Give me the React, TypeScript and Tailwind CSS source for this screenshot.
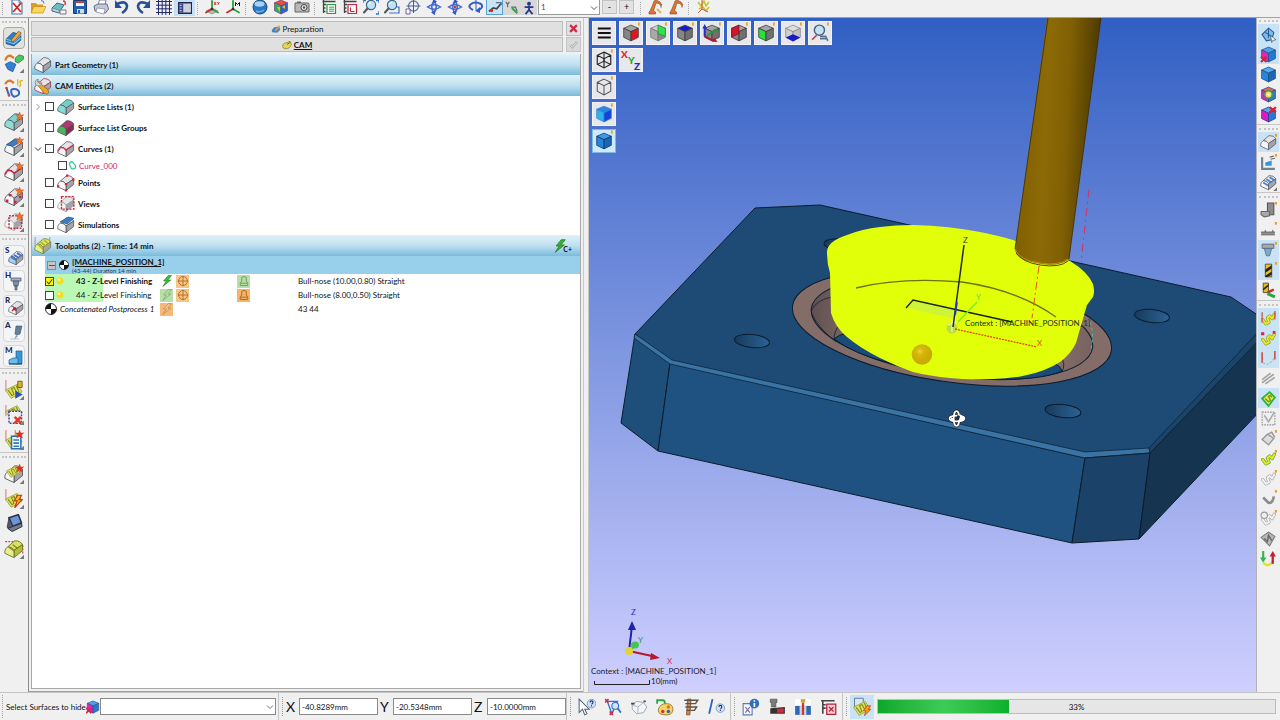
import { useState, type ReactNode } from 'react'

type P = { className?: string; children?: ReactNode }

const Ic = ({ className = 'size-4', children }: P) => (
  <svg viewBox="0 0 16 16" className={`shrink-0 ${className}`} fill="none" aria-hidden="true">
    {children}
  </svg>
)

/* ---------- shared drawing parts ---------- */

const Star = ({ x = 12.5, y = 3.5, c = '#f07a1c' }: { x?: number; y?: number; c?: string }) => (
  <path
    transform={`translate(${x} ${y})`}
    d="M0-3.4.8-1.1 3.2-1.2 1.4.4 2.3 2.9 0 1.5-2.3 2.9-1.4.4-3.2-1.2-.8-1.1Z"
    fill={c}
    stroke="#d9431c"
    strokeWidth=".4"
  />
)

const Corner = () => <path d="M16 12.5V16h-3.5Z" fill="#777" />

const BlockShape = ({ top = '#e4e4e8', side = '#a3a3aa', front = '#f6f6f8', line = '#55555c' }) => (
  <g stroke={line} strokeWidth=".7" strokeLinejoin="round">
    <path d="M3 6.200 8.500 1.500Q13 1.200 14.800 4.500L8 9Q6.500 6.500 3 6.200Z" fill={top} />
    <path d="M8 9 14.800 4.500V9.300L8 14.800Z" fill={side} />
    <path d="M.7 9.500Q.8 8 3 6.200 6.500 6.500 8 9V14.800L.7 11.500Z" fill={front} />
  </g>
)

const PathShape = () => (
  <g strokeLinecap="round" strokeLinejoin="round">
    <path d="M1.500 8 10.500 3.500 14.500 9.500 6 14.500Z" fill="#dfe35c" stroke="#9aa336" strokeWidth=".7" />
    <path d="M3.500 8.500 6.500 12.500 8 11.500 6 7 8 6 10.500 10.500 12 9.500 10 5" stroke="#7f8a26" strokeWidth=".9" />
  </g>
)

const CubeShape = ({ l = '#868686', r = '#707070', t = '#a5a5a5', line = '#3b3b3b' }) => (
  <g stroke={line} strokeWidth=".7" strokeLinejoin="round">
    <path d="M8 1 14.500 3.800 8 6.800 1.500 3.800Z" fill={t} />
    <path d="M1.500 3.800 8 6.800V15L1.500 11.800Z" fill={l} />
    <path d="M14.500 3.800 8 6.800V15l6.500-3.200Z" fill={r} />
  </g>
)

const Bolt = ({ c = '#35b52e', line = '#1d6d19' }) => (
  <path d="M9.500.8 3.500 8h3.600L2.500 15.200 13 6.800H9l5-6Z" fill={c} stroke={line} strokeWidth=".8" />
)

const Axes = ({ blue = '#2530b8' }) => (
  <g strokeWidth="1.800" strokeLinecap="round">
    <path d="M8 10V2" stroke={blue} />
    <path d="m8 10 6 3.500" stroke="#27a538" />
    <path d="m8 10-6 3.500" stroke="#c52a2a" />
    <circle cx="8" cy="10" r="1.300" fill="#333" />
  </g>
)

const Lens = () => (
  <g>
    <path d="m4.500 9.500-3.500 4" stroke="#555" strokeWidth="2" strokeLinecap="round" />
    <circle cx="8" cy="6" r="4.600" fill="#bfe2f7" stroke="#40688c" strokeWidth="1.200" />
    <path d="M5.500 5.500Q6 3.500 8 3.200" stroke="#fff" />
  </g>
)

const Robot = () => (
  <g>
    <path d="M2 15v-2l1-1 3-7 1-3 2-1 4 2 2 3-1.500.5-1.500-2-3-.5-2.500 8 2 1v2Z" fill="#dd7434" stroke="#8d4417" strokeWidth=".6" />
    <path d="M14 6.500v2" stroke="#555" />
  </g>
)

/* ---------- top toolbar ---------- */

const fileIcons: [string, ReactNode][] = [
  ['New', <Ic><path d="M3 1h7l3 3v11H3Z" fill="#fff" stroke="#5878a8" strokeWidth="1.200" /><path d="M10 1v3h3" fill="#cbd9ee" stroke="#5878a8" /><path d="m4 4 8 9M12 4l-8 9" stroke="#d02020" strokeWidth="1.800" /></Ic>],
  ['Open', <Ic><path d="M1 14V4h5l1 1.500h6V14Z" fill="#d99b20" /><path d="m1 14 3-6.500h12L13 14Z" fill="#fcd65a" stroke="#b98514" strokeWidth=".6" /><path d="M11 1.500q3 0 3 3" stroke="#4678b8" /></Ic>],
  ['Import', <Ic><path d="m1 9 5-5 7 2-4 6Z" fill="#66c0bb" stroke="#44688b" /><path d="M1 9v3l7 2 1-2" fill="#c2cede" stroke="#44688b" /><path d="M9 11h6v4H9Z" fill="#f6f6f6" stroke="#777" /><path d="M12 2q3 0 2 4" stroke="#d03844" strokeWidth="1.500" /></Ic>],
  ['Save', <Ic><path d="M1.500 1.500h13v13h-13Z" fill="#235fad" stroke="#173e77" /><path d="M4 2h8v5H4Z" fill="#fff" /><path d="M4 2h8v2H4Z" fill="#dc3838" /><path d="M5 10h7v4.500H5Z" fill="#cfdcec" /><path d="M6 11h2v3H6Z" fill="#235fad" /></Ic>],
  ['Print', <Ic><path d="m5 6 1.500-5H13l-1 5" fill="#fff" stroke="#7c84a2" /><path d="m1 7 4-2h9l1.500 5-3 4L2 12Z" fill="#c4c9d9" stroke="#656d8c" /><path d="m4 9 8 1-1 5-8-2Z" fill="#fff" stroke="#7c84a2" strokeWidth=".7" /></Ic>],
  ['Undo', <Ic><path d="M3 5q9-4 10 2 0 4-5 7" stroke="#274f96" strokeWidth="2.600" /><path d="M1 1v8h7Z" fill="#274f96" /></Ic>],
  ['Redo', <Ic><path d="M13 5Q4 1 3 7q0 4 5 7" stroke="#274f96" strokeWidth="2.600" /><path d="M15 1v8H8Z" fill="#274f96" /></Ic>],
  ['Grid', <Ic><path d="M2.500 0v16M6.200 0v16M9.800 0v16M13.500 0v16M0 2.500h16M0 6.200h16M0 9.800h16M0 13.500h16" stroke="#23296a" /></Ic>],
]
const axisIcons: [string, ReactNode][] = [
  ['XY plane', <Ic><path d="m8 9 6 3-6 3-6-3Z" fill="#b9b9b9" stroke="#777" strokeWidth=".6" /><Axes blue="#28a038" /><path d="m10 3 2 3m0-3-2 3m3.300-3 1 1.500m1-1.500-1.500 3" stroke="#c92828" strokeWidth=".9" /></Ic>],
  ['Machine axes', <Ic><Axes blue="#28a038" /><path d="M10.500 7V3.500l2 2 2-2V7" stroke="#111" /></Ic>],
]
const viewIcons: [string, ReactNode][] = [
  ['Render', <Ic><circle cx="8" cy="8" r="7" fill="#2b78c2" stroke="#174a82" /><ellipse cx="7.500" cy="5" rx="5" ry="2.800" fill="#a4d4f4" /><path d="M4 12q4 2 8-1" stroke="#66b8ee" strokeWidth="1.500" /></Ic>],
  ['Colours', <Ic><CubeShape l="#24b35d" r="#2864d8" t="#ee4f2e" line="#7a3c88" /><path d="m4 8 3 5V8Zm5 0 3 2v-4Z" fill="#ecbd26" /></Ic>],
  ['Camera', <Ic><path d="M1 4h13q1 0 1 1v8H1Z" fill="#b8b8b4" stroke="#666" /><circle cx="10" cy="8.500" r="3" fill="#eee" stroke="#444" /><path d="M3 2.500h4V4H3Z" fill="#666" /><circle cx="10" cy="8.500" r="1.300" fill="#555" /></Ic>],
]
const Sheet = ({ c, wide }: { c: string; wide?: boolean }) => <Ic><path d="M1.500 2.500h13M2.500 1v13M2 5.500h3M2 9h2.500M2 12.500h2.500" stroke="#444" strokeWidth="1.300" /><path d="M6 5.500h8.500v9H6Z" fill="#f7f7f7" stroke={c} strokeWidth="1.200" />{wide ? <path d="M8 8.200h5M8 10.200h5M8 12.200h5" stroke={c} strokeWidth=".9" /> : <path d="M8.500 8.500v4h4" stroke={c} />}</Ic>
const Orbit = ({ children }: P) => <Ic><path d="M1.500 8Q8 3.500 14.500 8 8 12.500 1.500 8Z" stroke="#4668d0" strokeWidth="1.500" /><path d="M8 1.500Q3.500 8 8 14.500 12.500 8 8 1.500Z" stroke="#4668d0" strokeWidth="1.500" /><path d="M7 0v5l4-2.500ZM9 16v-5l-4 2.500Z" fill="#3159c8" />{children}</Ic>
const zoomIcons: [string, ReactNode][] = [
  ['Tree list', <Sheet c="#2a9b48" wide />],
  ['Hide list', <Sheet c="#bd2a43" />],
  ['Zoom all', <Ic><Lens /><path d="M0 4V1.500h3M13 1.500h3V4M16 12v3h-3" stroke="#3472ce" strokeWidth="1.300" /></Ic>],
  ['Zoom window', <Ic><path d="M7 8h8v6H5" stroke="#3472ce" strokeWidth="1.200" /><Lens /></Ic>],
  ['Centre', <Ic><circle cx="8.500" cy="7" r="5" stroke="#6681ad" strokeWidth="1.300" /><path d="M8.500 0v14M1.500 7h14" stroke="#44608e" /><path d="M1 10h4v5H1Z" fill="#fff" stroke="#7c5ca8" /></Ic>],
  ['Rotate', <Orbit />],
  ['Rotate point', <Orbit><circle cx="8" cy="8" r="1.300" fill="#d83a2a" /></Orbit>],
  ['Spin', <Ic><path d="M5 11Q-1 8 3 5t10 0q3 3-2 6" stroke="#3159c8" strokeWidth="2" /><path d="M12 8v6l-5-2Z" fill="#3159c8" /><path d="M8 0v11" stroke="#3159c8" /></Ic>],
]

const Sep = () => <span className="h-full w-1.5 shrink-0 py-0.5 pl-0.5"><span className="block h-full border-l border-dotted border-[#a5a5a5]" /></span>

const Tools = ({ items, cell }: { items: [string, ReactNode][]; cell: string }) => (
  <>
    {items.map(([name, icon]) => (
      <button key={name} type="button" aria-label={name} className={`flex shrink-0 items-center justify-center ${cell}`}>
        {icon}
      </button>
    ))}
  </>
)

function TopBar() {
  const cell = 'w-[21px] h-[13px]'
  return (
    <header className="flex h-[18px] shrink-0 items-start overflow-hidden border-b border-[#a0a0a0] bg-[#f0f0f0]">
      <Sep />
      <Tools cell={cell} items={fileIcons} />
      <button type="button" aria-label="Side panel" className="flex h-4 w-[21px] shrink-0 items-center justify-center bg-[#c5dff3]">
        <Ic className="size-3.5"><path d="M.5 2h15v12H.500Z" fill="#d0cfdc" stroke="#252750" strokeWidth="1.500" /><path d="M1 3h5v10H1Z" fill="#354c91" /><path d="M2 5h2M2 8h2M2 11h2" stroke="#fff" /></Ic>
      </button>
      <Sep />
      <Tools cell={cell} items={axisIcons} />
      <Sep />
      <Tools cell={cell} items={viewIcons} />
      <Sep />
      <Tools cell={cell} items={zoomIcons} />
      <button type="button" aria-label="Dynamic view" className="flex h-[15px] w-[17px] shrink-0 items-center justify-center border border-[#57a1d9] border-t-0 bg-[#c8e4f6]">
        <Ic className="size-3.5"><path d="m1 13 5-4 4 1 5-6" stroke="#444" strokeWidth="2" /><circle cx="4" cy="12" r="2" fill="#c92e2e" /><path d="M9 3h6v3" stroke="#607080" strokeWidth="1.500" /></Ic>
      </button>
      <button type="button" aria-label="Axis view" className="flex h-[15px] w-[17px] shrink-0 items-center justify-center bg-[#d8d8d8]">
        <Ic className="size-3.5"><path d="m1 1 2 3 2-3M3 4v3M7 7h5l2 5" stroke="#666" strokeWidth="1.300" /><path d="m8 8 6 6" stroke="#2aac3e" strokeWidth="2.500" /></Ic>
      </button>
      <button type="button" aria-label="Walk" className="mr-px flex h-[15px] w-[17px] shrink-0 items-center justify-center bg-[#d8d8d8]">
        <Ic className="size-3.5"><circle cx="8" cy="3" r="2.200" fill="#27338e" /><path d="M3 7h10M8 5v5l-4 5m4-5 4 5" stroke="#27338e" strokeWidth="2" /></Ic>
      </button>
      <div className="relative flex shrink-0">
        <select aria-label="Level" className="h-[15px] w-[62px] appearance-none border border-t-0 border-[#999] bg-white pl-0.5 text-[8px] leading-[13px] text-[#7a2590]">
          <option>1</option>
        </select>
        <Ic className="pointer-events-none absolute top-1 right-0.5 size-2"><path d="m2 5 6 6 6-6" stroke="#444" strokeWidth="1.800" /></Ic>
      </div>
      <button type="button" className="ml-0.5 h-3.5 w-[15px] border border-[#c2c2c2] bg-[#e2e2e2] text-[9px] leading-3">-</button>
      <button type="button" className="ml-0.5 mr-1 h-3.5 w-[15px] border border-[#c2c2c2] bg-[#e2e2e2] text-[9px] leading-3">+</button>
      <Sep />
      <Tools cell={cell} items={[
        ['Robot', <Ic><Robot /><path d="m10 10 4 4" stroke="#e8b348" strokeWidth="2" /></Ic>],
        ['Robot arm', <Ic><Robot /></Ic>],
      ]} />
      <Sep />
      <Tools cell={cell} items={[
        ['Toolpath axes', <Ic><path d="m3 3 3 4 3-5 2 5 3-4M4 10l4-2 3 4 3-4" stroke="#c9c130" strokeWidth="1.500" /><path d="M7 0v10l-4 4m4-4 6 3" stroke="#c65a32" /></Ic>],
      ]} />
    </header>
  )
}

/* ---------- left toolbar ---------- */

const Letter = ({ ch, children }: { ch: string; children: ReactNode }) => (
  <span className="relative flex size-[22px] items-center justify-center rounded-[4px] border border-[#d4d6da] bg-[#f4f5f6] pt-1 pl-1">
    <span className="absolute top-0 left-px text-[8px] leading-[8px] font-black text-[#23285f]">{ch}</span>
    {children}
  </span>
)

const L = 'size-5'
const leftGroups: [string, ReactNode][][] = [
  [
    ['Preparation', <span className="flex size-[22px] items-center justify-center rounded-[4px] border border-[#a9a9a4] bg-[#e2e2dd]"><Ic className="size-[18px]"><path d="m1 9 6-6 7 2v5l-6 5-7-2Z" fill="#2b7ec7" stroke="#194e84" strokeWidth=".7" /><path d="m1 9 7 2 6-6M1 11l7 2 6-5" stroke="#8cc6ee" strokeWidth=".9" /><path d="m6 9 6-7 2.500 1.500-6 7-3 1Z" fill="#f0a83c" stroke="#814e16" strokeWidth=".6" /></Ic></span>],
    ['Transform solid', <Ic className={L}><path d="M1 6q1-4 4-4l3 2" stroke="#e07a28" strokeWidth="1.800" /><path d="m9 4 3-2.500 3.500 1V5l-4 3L9 7Z" fill="#4cc760" stroke="#3d6645" strokeWidth=".6" /><path d="m1 9 4-2 4.500 2L7 15l-4-2Z" fill="#3380d5" stroke="#1c4e91" strokeWidth=".6" /><Corner /></Ic>],
    ['Transform curve', <Ic className={L}><path d="M1 5q1-3 4-3l3 2" stroke="#e07a28" strokeWidth="1.800" /><path d="M11 1v5M15 2q-3 0-2 2t-1 3" stroke="#d9c02a" strokeWidth="1.200" /><path d="m2 8 2 6M6 9q5-1 6 2t-4 4q-3-2-2-6" stroke="#2f67c5" strokeWidth="1.600" /><circle cx="2" cy="8" r="1" fill="#c8443b" /><circle cx="4" cy="14" r="1" fill="#c8443b" /></Ic>],
  ],
  [
    ['Surface list', <Ic className={L}><BlockShape top="#7fd3cd" front="#92dcd6" /><Star /><Corner /></Ic>],
    ['Simulation', <Ic className={L}><BlockShape /><path d="m2 6 7-4 5 1-7 4.500Z" fill="#3b80c6" stroke="#1f4d85" strokeWidth=".6" /><Star y={3} /><Corner /></Ic>],
    ['Curve', <Ic className={L}><BlockShape /><path d="M1 10 3 6.500Q6.500 6.500 8 9l6.500-4.500" stroke="#c8243e" strokeWidth="1.200" /><Star /><Corner /></Ic>],
    ['Points', <Ic className={L}><BlockShape /><path d="M1.500 11h2M4 6.500h2M8 12h2M12 8h2" stroke="#d3203a" strokeWidth="2" /><Star /><Corner /></Ic>],
    ['View', <Ic className={L}><BlockShape line="#aaa" /><path d="M4 3h10v10H4Z" stroke="#bb3344" strokeDasharray="1.500 1" strokeWidth="1.200" /><Star /><Corner /></Ic>],
  ],
  [
    ['Surface', <Letter ch="S"><Ic><BlockShape front="#aecdf5" /><path d="m3 7 5 3M6 5l5 3M9 3l5 3" stroke="#3475d8" strokeWidth="2" /></Ic></Letter>],
    ['Holder', <Letter ch="H"><Ic><path d="M3 3h10v3H3Z" fill="#a8b2bd" stroke="#53606d" strokeWidth=".8" /><path d="M5 6h6l-1 5H6ZM7 11h2v4H7Z" fill="#7890a4" stroke="#44576a" strokeWidth=".7" /></Ic></Letter>],
    ['Region', <Letter ch="R"><Ic><BlockShape /><path d="m4 11 3-3m-2 0h2.500V11" stroke="#d0202e" strokeWidth="1.500" /></Ic></Letter>],
    ['Attach', <Letter ch="A"><Ic><path d="M8 1h6l-2 8-3 1-2-1Z" fill="#657f9c" stroke="#3d536c" strokeWidth=".6" /><path d="m8 10-2 5 4-4" fill="#8fa2b4" /><path d="M2 14h9" stroke="#bdc7d0" /></Ic></Letter>],
    ['Machine', <Letter ch="M"><Ic><path d="M8 1h6v13H8Z" fill="#3798d8" stroke="#1d5d92" strokeWidth=".7" /><path d="m1 10 4-2h5v6H1Z" fill="#69bdea" stroke="#1d5d92" strokeWidth=".7" /><path d="M1 14h13" stroke="#345" /></Ic></Letter>],
  ],
  [
    ['Run toolpath', <Ic className={L}><path d="M1.500 0v9" stroke="#e88" /><PathShape /><path d="M11 1h3.500v5H11Z" fill="#dfb028" stroke="#554312" strokeWidth=".6" /><path d="m9 8.500 6 3-6 3.500Z" fill="#2351ba" /><Corner /></Ic>],
    ['Delete toolpath', <Ic className={L}><path d="M1.500 0v9" stroke="#e88" /><g transform="translate(0 -3)"><PathShape /></g><path d="M4 5h10v9.500H4Z" fill="#f0f0f0" stroke="#3345c0" strokeWidth="1.200" strokeDasharray="1.500 1" /><path d="m8.500 9.500 5 5m0-5-5 5" stroke="#e13a25" strokeWidth="2" /><Corner /></Ic>],
    ['Toolpath list', <Ic className={L}><path d="M1.500 0v9M9 0v4" stroke="#e88" /><PathShape /><path d="M6 5h7.500v10H6Z" fill="#f1f8fd" stroke="#2d6db1" strokeWidth="1.200" /><path d="M7.500 8h4.500M7.500 10.500h4.500M7.500 13h4.500" stroke="#3376bb" strokeWidth="1.300" /><Star c="#e22" /><Corner /></Ic>],
  ],
  [
    ['New stock', <Ic className={L}><BlockShape /><g transform="translate(1 -1) scale(.8)"><PathShape /></g><Star c="#e22" /><Corner /></Ic>],
    ['Compute', <Ic className={L}><path d="M1.500 0v9" stroke="#e88" /><PathShape /><path d="m11 5-3 4.500h2.500L8.500 15l6-6.500H12L14 5Z" fill="#f3c020" stroke="#c83418" strokeWidth=".9" /><Corner /></Ic>],
    ['Workstation', <Ic className={L}><path d="m4 3 7.500-2.500L14 7l-7 3Z" fill="#6d92dc" stroke="#2a2f3c" strokeWidth="1.200" /><path d="m4 3-1.500 7.500 2 2L7 10Z" fill="#555a66" stroke="#2a2f3c" strokeWidth=".6" /><path d="m3 11.500 4-1.500 7-2.500.500 2.500L6.500 14Z" fill="#777c88" stroke="#2a2f3c" strokeWidth=".8" /></Ic>],
    ['Stock', <Ic className={L}><path d="M1 2h10l4 3v7" stroke="#d04040" strokeDasharray="1.500 1" /><BlockShape top="#dbe35e" front="#e9ee8c" side="#b4bd3c" line="#68702c" /><path d="m4 6.500 4 3M7 4.500l4 3" stroke="#7e8b28" /><Corner /></Ic>],
  ],
]

const DotsRow = ({ first, className }: { first?: boolean; className: string }) => (
  <span className={`flex shrink-0 items-center px-0.5 ${className} ${first ? '' : 'border-t border-[#c6c6c6]'}`}>
    <span className="block w-full border-t-2 border-dotted border-[#c4c4c4]" />
  </span>
)

function LeftBar() {
  return (
    <nav aria-label="Preparation tools" className="w-[29px] shrink-0 overflow-hidden border-r border-[#8f8f8f] bg-[#f0f0f0]">
      {leftGroups.map((g, i) => (
        <div key={i} className="flex flex-col">
          <DotsRow first={i === 0} className={i === 0 ? 'h-[7px]' : 'h-[9px]'} />
          <Tools items={g} cell="h-[25px] w-7" />
        </div>
      ))}
    </nav>
  )
}

/* ---------- tree panel ---------- */

const Check = ({ label, checked = false, className = '' }: { label: string; checked?: boolean; className?: string }) => {
  const [on, setOn] = useState(checked)
  return (
    <label className={`relative flex size-[9px] shrink-0 ${className}`}>
      <input
        type="checkbox"
        aria-label={label}
        checked={on}
        onChange={() => setOn(!on)}
        className="size-[9px] appearance-none border border-[#444] bg-white checked:bg-[#fbf30c]"
      />
      {on && <Ic className="pointer-events-none absolute inset-0 size-[9px]"><path d="m3 8 4 4 6-8" stroke="#333" strokeWidth="1.800" /></Ic>}
    </label>
  )
}

const Bar = ({ icon, children, action }: { icon: ReactNode; children: ReactNode; action?: ReactNode }) => (
  <h2 className="flex h-[21px] items-center bg-linear-to-b from-[#e0f1fa] from-0% via-[#bfe0f0] via-50% to-[#79bbdb] to-100% pl-0.5 text-[8px] font-bold">
    <span className="flex w-[21px] shrink-0">{icon}</span>
    <span className="flex-1">{children}</span>
    {action}
  </h2>
)

const B = 'size-[18px]'
const Chevron = ({ open }: { open: boolean }) => (
  <Ic className="size-2"><path d={open ? 'm2 5 6 6 6-6' : 'm5 2 6 6-6 6'} stroke={open ? '#333' : '#999'} strokeWidth="2" /></Ic>
)

const Row = ({ name, icon, open }: { name: string; icon: ReactNode; open?: boolean }) => (
  <li className="flex h-[21px] items-center pl-0.5 text-[8px] font-bold">
    <span className="flex w-[11px]">
      {open !== undefined && <button type="button" aria-label={`Toggle ${name}`}><Chevron open={open} /></button>}
    </span>
    <Check label={name} />
    <span className="mr-[3px] ml-[3px] flex">{icon}</span>
    {name}
  </li>
)

const Wheel = ({ className }: P) => (
  <Ic className={className}><circle cx="8" cy="8" r="7.300" fill="#fff" stroke="#111" strokeWidth="1.200" /><path d="M8 8V.7A7.300 7.300 0 0 0 .7 8ZM8 8v7.300A7.300 7.300 0 0 0 15.300 8Z" fill="#111" /></Ic>
)

const Tile = ({ c, children }: { c: string; children: ReactNode }) => (
  <span className={`flex size-[13px] items-center justify-center ${c}`}>{children}</span>
)
const Target = () => <Ic className="size-3"><circle cx="8" cy="8" r="6" stroke="#b9702b" strokeWidth="1.300" /><path d="M8 1v14M1 8h14" stroke="#b9702b" strokeWidth="1.300" /></Ic>
const Stamp = ({ c }: { c: string }) => <Ic className="size-3"><path d="M5 3q3-2 6 0v5l2 3v3H3v-3l2-3ZM3 11h10" stroke={c} strokeWidth="1.300" /></Ic>

const PathRow = ({ n, bold, tool }: { n: number; bold?: boolean; tool: string }) => (
  <li className={`grid h-3.5 grid-cols-[58px_57px_16px_61px_61px_1fr] items-center text-[8px] ${bold ? '[&_b]:font-bold' : '[&_b]:font-normal'}`}>
    <span className="flex h-full items-center gap-0.5 bg-[#b9f9b5]">
      <Check label={`Toolpath ${n}`} checked={bold} />
      <Ic className="size-2"><circle cx="8" cy="8" r="7" fill="#f1df27" /><circle cx="6" cy="5.500" r="2.500" fill="#fff69c" /></Ic>
      <b className="ml-2.5 whitespace-nowrap">{n} - Z-Level Finishing</b>
    </span>
    <span />
    <Tile c={bold ? '' : 'bg-[#b7dfa7]'}><Ic className="size-3"><Bolt c={bold ? '#3cc233' : '#b7dfa7'} line={bold ? '#236e1e' : '#729a66'} /></Ic></Tile>
    <Tile c="bg-[#f7c787]"><Target /></Tile>
    <Tile c={bold ? 'bg-[#b7dfa7]' : 'bg-[#f7b467]'}><Stamp c={bold ? '#6ea15f' : '#a8682b'} /></Tile>
    <span className="whitespace-nowrap">{tool}</span>
  </li>
)

function TreePanel() {
  return (
    <section className="flex min-w-0 flex-[550] flex-col border-b border-[#a0a0a0] pt-[3px] pr-0.5 pb-0.5 pl-0.5">
      <div className="flex h-[15px] gap-[3px] text-[8px]">
        <button type="button" className="flex min-w-0 flex-1 items-center justify-center gap-0.5 border border-[#bcbcbc] bg-[#e0e0e0]">
          <Ic className="size-2.5"><path d="m1 10 4-5 8-1 2 5-5 5-8-1Z" fill="#3f86c7" /><path d="m6 10 7-8 2 1.500-7 8Z" fill="#e99a3c" /></Ic>
          Preparation
        </button>
        <button type="button" aria-label="Close" className="flex w-[15px] items-center justify-center border border-[#bcbcbc] bg-[#e0e0e0]">
          <Ic className="size-[9px]"><path d="m2 2 12 12M14 2 2 14" stroke="#cf2b45" strokeWidth="4" /></Ic>
        </button>
      </div>
      <div className="mt-px flex h-[15px] gap-[3px] text-[8px]">
        <button type="button" className="flex min-w-0 flex-1 items-center justify-center gap-0.5 border border-[#bcbcbc] bg-[#e0e0e0] font-bold">
          <Ic className="size-2.5"><path d="M1 10q0-5 7-6l5-2 2 5q-2 7-9 7-5 0-5-4Z" fill="#e5d650" stroke="#77702c" /><path d="m8 7 5-3" stroke="#555" strokeWidth="1.500" /></Ic>
          <span className="underline">CAM</span>
        </button>
        <button type="button" aria-label="Accept" className="flex w-[15px] items-center justify-center border border-[#c4c4c4] bg-[#d9d9d9]">
          <Ic className="size-[9px]"><path d="m2 9 4 4 8-10" stroke="#aaa" strokeWidth="4" /><path d="m2 9 4 4 8-10" stroke="#eee" strokeWidth="1.500" /></Ic>
        </button>
      </div>
      <div className="mt-0.5 min-h-0 flex-1 overflow-hidden border border-t-0 border-[#a8a8a8] bg-white">
        <Bar icon={<Ic className={B}><BlockShape /></Ic>}>Part Geometry (1)</Bar>
        <Bar icon={<Ic className={B}><BlockShape line="#b92b3c" /><path d="M2 4q3-1 4 2l6 5q2 3 0 4t-4-2L4 8Q1 7 2 4Z" fill="#e8a836" stroke="#99651a" strokeWidth=".7" /><path d="M1 5q0-3 3-3L3 4l2 2 2-1q0 3-3 3T1 5Z" fill="#d7d7db" stroke="#77777c" strokeWidth=".6" /></Ic>}>CAM Entities (2)</Bar>
        <ul>
          <Row name="Surface Lists (1)" open={false} icon={<Ic className={B}><BlockShape top="#6fd0c8" front="#86ddd4" /></Ic>} />
          <Row name="Surface List Groups" icon={<Ic className={B}><BlockShape top="#b0386c" front="#4bb55e" side="#8d2852" /></Ic>} />
          <Row name="Curves (1)" open icon={<Ic className={B}><BlockShape /><path d="M1 10 3 6.500Q6.500 6.500 8 9l6.500-4.500" stroke="#d2304a" strokeWidth="1.200" /></Ic>} />
          <li className="flex h-[13px] items-center pl-[26px] text-[8px] text-[#e0185e]">
            <Check label="Curve_000" />
            <Ic className="mr-0.5 ml-px size-[9px]"><path d="M4 2q4-2 6 2l3 4q2 5-3 6t-5-4Q1 7 4 2Z" stroke="#36c69c" strokeWidth="2.200" /></Ic>
            Curve_000
          </li>
          <Row name="Points" icon={<Ic className={B}><BlockShape /><path d="M0 11h2M8 1.500h2M7 9h2M13.500 5h2M7 14.500h2" stroke="#d3203a" strokeWidth="2" /></Ic>} />
          <Row name="Views" icon={<Ic className={B}><BlockShape line="#999" /><path d="M4 1.500h11v11H4Z" stroke="#cc2a3d" strokeDasharray="2 1" strokeWidth="1.200" /></Ic>} />
          <Row name="Simulations" icon={<Ic className={B}><BlockShape /><path d="m3 5 7-4 5 1-6 5Z" fill="#3b80c6" stroke="#1f4d85" strokeWidth=".6" /></Ic>} />
        </ul>
        <Bar
          icon={<Ic className={B}><path d="M1 0v8M14 0v5" stroke="#e08a8a" /><BlockShape top="#dbe35e" front="#e9ee8c" line="#77803c" /><path d="m3 6 5 5M6 4.500l5 4M9 3l4 3" stroke="#aeb52d" strokeWidth="1.300" /></Ic>}
          action={<button type="button" aria-label="Compute all" className="mr-2 flex items-end"><Ic className="size-3.5"><Bolt /></Ic><span className="-ml-1 text-[7px] leading-[7px]">C+</span></button>}
        >
          Toolpaths (2) - Time: 14 min
        </Bar>
        <ul className="pl-[13px]">
          <li className="flex h-[18px] items-center bg-[#98cfea]">
            <button type="button" aria-label="Collapse" className="ml-0.5 flex size-[9px] items-center justify-center border border-[#888] bg-[#c5c5c5]"><span className="block w-1.5 border-t border-[#555]" /></button>
            <Wheel className="mr-[3px] ml-[3px] size-2.5" />
            <div className="leading-none">
              <div className="text-[8px] leading-[10px] font-bold underline">[MACHINE_POSITION_1]</div>
              <div className="text-[6px] leading-[7px] text-[#223a55]">(43-44) Duration 14 min</div>
            </div>
          </li>
          <PathRow n={43} bold tool="Bull-nose (10.00,0.80) Straight" />
          <PathRow n={44} tool="Bull-nose (8.00,0.50) Straight" />
          <li className="grid h-3.5 grid-cols-[115px_138px_1fr] items-center text-[8px]">
            <span className="flex items-center gap-[3px] whitespace-nowrap italic"><Wheel className="size-3" />Concatenated Postprocess 1</span>
            <Tile c="bg-[#f7b97a]"><Ic className="size-3"><Bolt c="#f3c894" line="#b77634" /></Ic></Tile>
            <span>43 44</span>
          </li>
        </ul>
      </div>
    </section>
  )
}

/* ---------- 3D viewport ---------- */

function Scene() {
  return (
    <svg className="absolute inset-0 size-full" viewBox="589 18 667 674" preserveAspectRatio="xMidYMid slice" role="img" aria-label="3D part view">
      <defs>
        <linearGradient id="sky" x1="0" y1="0" x2="0" y2="1"><stop stopColor="#315fc3" /><stop offset="1" stopColor="#cfcfff" /></linearGradient>
        <linearGradient id="rod" x1="0" y1="0" x2="1" y2=".13"><stop stopColor="#7c5c00" /><stop offset=".4" stopColor="#8c6a06" /><stop offset=".65" stopColor="#806004" /><stop offset="1" stopColor="#4c3900" /></linearGradient>
        <radialGradient id="ball" cx=".4" cy=".35"><stop stopColor="#ead24a" /><stop offset=".35" stopColor="#d8b70a" /><stop offset="1" stopColor="#c9ab04" /></radialGradient>
        <linearGradient id="hole"><stop stopColor="#173b5c" /><stop offset="1" stopColor="#2c6294" /></linearGradient>
        <linearGradient id="wall"><stop stopColor="#5f504f" /><stop offset=".2" stopColor="#86706d" /><stop offset=".8" stopColor="#8d7672" /><stop offset="1" stopColor="#77625f" /></linearGradient>
      </defs>
      <rect x="-1000" y="18" width="4000" height="674" fill="url(#sky)" />
      <g stroke="#0b1c2c" strokeWidth="1" strokeLinejoin="round">
        <path d="M755 208 820 205 1231 297 1262 318V334L1150 450 1085 454 668 361 635 334Z" fill="#1d4b75" />
        <path d="M635 334 670 363 658 451 621 423Z" fill="#1e4e7a" />
        <path d="M670 363 1085 458 1072 543 658 451Z" fill="#1f5281" />
        <path d="M635 334 672 360 1085 452 1149 448 1150 453 1085 458 670 364 634 338Z" fill="#3a74a5" strokeWidth=".7" />
        <path d="M1085 458 1150 453 1139 539 1072 543Z" fill="#1b4268" />
        <path d="M1150 453 1262 336V409L1139 539Z" fill="#15344f" />
        <path d="M1149 448 1262 328V337L1150 453Z" fill="#1b4468" strokeWidth=".7" />
        <ellipse cx="752" cy="341" rx="17.500" ry="6.500" transform="rotate(6 752 341)" fill="url(#hole)" />
        <ellipse cx="1152" cy="316" rx="17.500" ry="6.500" transform="rotate(6 1152 316)" fill="url(#hole)" />
        <ellipse cx="1063" cy="411" rx="18" ry="6.500" transform="rotate(6 1063 411)" fill="url(#hole)" />
        <ellipse cx="841" cy="245" rx="17" ry="6" transform="rotate(6 841 245)" fill="url(#hole)" />
        <ellipse cx="952" cy="328" rx="161" ry="54" transform="rotate(8 952 328)" fill="#846c69" />
        <ellipse cx="952" cy="328" rx="142" ry="48" transform="rotate(8 952 328)" fill="url(#wall)" />
        <path d="M811 311Q816 300 832 297M812 314Q818 328 836 342" fill="none" strokeWidth=".7" />
        <path d="M834 340Q834 330 840 325M1062 372Q1066 364 1061 357" fill="none" strokeWidth=".8" />
        <path d="M834 339Q850 322 960 340 1060 356 1062 371 1040 381 985 379 872 368 834 339Z" fill="#194c78" />
      </g>
      <path d="M827 253Q826 242 847 235 862 229 880 227 895 225 913 225 950 226 980 232 1000 236 1013 240L1070 261Q1088 272 1093 284 1095 292 1093 297L1087 305 1082 322 1076 343Q1071 354 1060 362 1046 371 1027 375 1010 379 993 379 968 380 950 378 930 376 913 372 896 366 880 358 860 348 847 337 835 327 831 313L830 273Q827 264 827 253Z" fill="#e2ff0a" />
      <path d="M856 288Q900 277 962 282 1018 290 1056 317" fill="none" stroke="#6b7212" strokeWidth="1.300" />
      <path d="M908 308 913 301 960 311 952 318Z" fill="#cdf33a" />
      <path d="M906 308 913 300 1012 322" fill="none" stroke="#15210a" strokeWidth="1.300" />
      <path d="M1047 18H1101L1069 259Q1058 268 1036 263 1018 260 1015 250Z" fill="url(#rod)" />
      <path d="M1015 249Q1019 260 1040 263 1058 266 1068 259" fill="none" stroke="#d08f22" strokeWidth=".8" />
      <path d="M1016 253Q1022 262 1040 265 1060 268 1068 261" fill="none" stroke="#2d2200" strokeWidth=".8" />
      <path d="M1048 18 1015 249M1101 18 1069 259" stroke="#3d2c00" strokeWidth=".8" />
      <path d="M1039 266 1032 318" stroke="#e45a12" strokeDasharray="8 3 2 3" />
      <path d="M1089 190 1081 262" stroke="#d0365f" strokeDasharray="8 4 2 4" />
      <path d="M1090 322q5 13 0 30" fill="none" stroke="#54bd9a" strokeDasharray="3 3" />
      <circle cx="952" cy="328" r="5.500" fill="#bade40" /><path d="m948 325 10-4M952 320v12" stroke="#f4ffd2" />
      <path d="M953 327 964 245" stroke="#222638" strokeWidth="1.500" />
      <path d="M955 315 957 302" stroke="#2435c9" strokeWidth="1.800" />
      <path d="M958 322 977 302" stroke="#75ee2a" strokeWidth="1.500" />
      <path d="M955 329 1037 347" stroke="#da4c0e" strokeWidth="1.300" strokeDasharray="2 1" />
      <circle cx="922" cy="354.500" r="10.300" fill="url(#ball)" />
      <g fontSize="8" fill="#20301a">
        <text x="963" y="243" fill="#334023">Z</text><text x="976" y="300" fill="#68d622">Y</text><text x="1037" y="346" fill="#c6520a">X</text>
        <text x="965" y="326">Context : [MACHINE_POSITION_1]</text>
      </g>
      <g fill="none" stroke="#1a1a1a" strokeWidth="2.800"><ellipse cx="957" cy="418.500" rx="7.500" ry="2.800" /><ellipse cx="956.500" cy="418.500" rx="2.800" ry="7.500" /></g>
      <g fill="none" stroke="#fff" strokeWidth="1.700"><ellipse cx="957" cy="418.500" rx="7.500" ry="2.800" /><ellipse cx="956.500" cy="418.500" rx="2.800" ry="7.500" /></g>
      <path d="m960 414 5 4.500-5 3ZM952 422l-1.500-5 4 2Z" fill="#fff" /><path d="m957.500 415 2.500 1-1 4-2.500-1Z" fill="#1a2c3c" />
      <g strokeWidth="2">
        <path d="M629 651 632 626" stroke="#2020a8" /><path d="m628 630 4-9 4 9Z" fill="#2020a8" />
        <path d="M629 651 652 656" stroke="#b5192f" /><path d="m660 658-9-5-1 7Z" fill="#b5192f" />
        <path d="m630 650 8-6" stroke="#42b551" /><ellipse cx="635" cy="645" rx="4" ry="3.500" fill="#42c653" />
        <circle cx="629" cy="651" r="4" fill="#e0d431" />
      </g>
      <g fontSize="8" fill="#222"><text x="631" y="615" fill="#2727c9">Z</text><text x="638" y="643" fill="#28944b">Y</text><text x="667" y="664" fill="#db1d4f">X</text>
        <text x="591" y="674">Context : [MACHINE_POSITION_1]</text><text x="651" y="684">10(mm)</text>
      </g>
      <path d="M594.500 681v3.500H649.500V680" fill="none" stroke="#222" />
    </svg>
  )
}

const Tick = () => <path d="M14.200-1.500h1.600v3h-1.600Z" fill="#f0a51e" />
const V = 'size-[18px] overflow-visible'
const viewRow: [string, ReactNode][] = [
  ['Menu', <Ic className={V}><path d="M2.500 4h11.500M2.500 8h11.500M2.500 12h11.500" stroke="#111" strokeWidth="1.800" /></Ic>],
  ['Right view', <Ic className={V}><CubeShape r="#e3161c" /><Tick /></Ic>],
  ['Back view', <Ic className={V}><CubeShape t="#d0d0d0" l="#a9a9a9" r="#8a8a8a" line="#777" /><path d="M8 1 14.500 3.800V11L8 8.500Z" fill="#35e14a" stroke="#218230" strokeWidth=".6" /><Tick /></Ic>],
  ['Top view', <Ic className={V}><CubeShape t="#1818cf" /><Tick /></Ic>],
  ['Isometric view', <Ic className={V}><CubeShape /><path d="M3 11l8-6" stroke="#23983d" strokeWidth="1.500" /><path d="m13 3.500-1 3.500-3-2Z" fill="#23983d" /><path d="M1.500 11V2" stroke="#2430c8" strokeWidth="1.800" /><path d="M-.5 4 1.500 0 3.500 4Z" fill="#2430c8" /><path d="m1.500 11 8 4" stroke="#b51b30" strokeWidth="1.800" /><path d="m13 16-5-.2 2.200-3.500Z" fill="#b51b30" /><Tick /></Ic>],
  ['Left view', <Ic className={V}><CubeShape /><path d="M1.500 3.800 8 1V8.500L1.500 11.800Z" fill="#d3162f" stroke="#6a1520" strokeWidth=".6" /><Tick /></Ic>],
  ['Front view', <Ic className={V}><CubeShape l="#23e535" /><Tick /></Ic>],
  ['Bottom view', <Ic className={V}><CubeShape l="#cfcfcf" r="#bfbfbf" t="#dedede" line="#888" /><path d="M8 9 14.500 12 8 15.500 1.500 12Z" fill="#1818cf" /><Tick /></Ic>],
  ['Look at', <Ic className={V}><path d="M5 10 1 14" stroke="#b5483f" strokeWidth="1.500" /><circle cx="7.500" cy="5.500" r="4.500" fill="#c5e2f3" stroke="#45647d" strokeWidth="1.300" /><path d="M8 11h5l2 4M8 13h6" stroke="#5e7590" strokeWidth="1.500" /><Tick /></Ic>],
]
const viewBtn = 'flex size-6 items-center justify-center bg-[#e8e8ec] border border-[#f4f4f6]'

function Viewport() {
  const wire = 'M8 1 14 3.800V11.800L8 15 2 11.800V3.800ZM2 3.800 8 6.800l6-3M8 6.800V15'
  return (
    <main className="relative min-w-0 flex-[667] overflow-hidden">
      <Scene />
      <div className="relative flex w-fit flex-col gap-[3px] pt-[3px] pl-[3px]">
        <div className="flex gap-[3px]"><Tools items={viewRow} cell={viewBtn} /></div>
        <div className="flex gap-[3px]">
          <button type="button" aria-label="Wireframe" className={viewBtn}><Ic className={V}><path d={wire} stroke="#222" /><path d="M8 1V9l6 3M8 9l-6 3" stroke="#222" strokeWidth=".9" /><Tick /></Ic></button>
          <button type="button" aria-label="XYZ" className="relative size-6 border border-[#f4f4f6] bg-[#e8e8ec] text-[10px] leading-none font-black">
            <span className="absolute top-0 left-px text-[#e8262c]">X</span><span className="absolute top-1.5 left-2 text-[#16ad2f]">Y</span><span className="absolute right-0.5 bottom-0 text-[#1b2ec4]">Z</span>
          </button>
        </div>
        <button type="button" aria-label="Hidden line" className={viewBtn}><Ic className={V}><path d={wire} stroke="#555" strokeWidth=".9" /><Tick /></Ic></button>
        <button type="button" aria-label="Shaded" className={viewBtn}><Ic className={V}><CubeShape l="#2fb4e8" r="#1743dd" t="#2d83df" line="#2d83df" /><Tick /></Ic></button>
        <button type="button" aria-label="Shaded with edges" className="flex size-6 items-center justify-center border border-[#7fb9e4] bg-[#cfe8fa]"><Ic className={V}><CubeShape l="#2385dc" r="#1a66b5" t="#3d9aec" line="#123a63" /><Tick /></Ic></button>
      </div>
    </main>
  )
}

/* ---------- right toolbar ---------- */

const R = 'size-[17px]'
const Dot = () => <path d="M14 0h2v2.500h-2Z" fill="#e8a22c" />
const Zig = ({ c, line }: { c: string; line: string }) => (
  <g strokeLinecap="round" strokeLinejoin="round">
    <path d="M2.500 9 5.500 13 8.500 11.500 7 7.500 9 5.500 11.500 8 13.500 4" stroke={line} strokeWidth="3" />
    <path d="M2.500 9 5.500 13 8.500 11.500 7 7.500 9 5.500 11.500 8 13.500 4" stroke={c} strokeWidth="1.800" />
  </g>
)
const gray = { c: '#f2f2f2', line: '#a6a6a6' }
const rightGroups: [string, boolean, ReactNode][][] = [
  [
    ['Pick faces', true, <Ic className={R}><path d="M2 8 8 2l5 4-2 7-5 1Z" fill="#7ebbe8" stroke="#285c98" /><path d="m5 6 6 4M8 3v8" stroke="#285c98" /><path d="m10 9 5 4-3 .500-1 2Z" fill="#fff" stroke="#444" strokeWidth=".6" /></Ic>],
    ['Hide surfaces', true, <Ic className={R}><CubeShape l="#df27b8" r="#2678d2" t="#48a1ee" line="#274e87" /><path d="m1 10 5 5m0-5-5 5" stroke="#d82438" strokeWidth="2" /></Ic>],
    ['Show surfaces', false, <Ic className={R}><CubeShape l="#2686dc" r="#1d68b4" t="#57aaf0" line="#1d4b80" /></Ic>],
    ['Surface colours', false, <Ic className={R}><CubeShape l="#d52abf" r="#3277d0" t="#e86455" line="#274e87" /><circle cx="8" cy="8" r="3.500" fill="#e8e257" stroke="#3a9b55" strokeWidth="1.300" /><circle cx="8" cy="8" r="1.200" fill="#fff" /></Ic>],
    ['Invert hidden', false, <Ic className={R}><CubeShape l="#e315cb" r="#2a78d5" t="#5aa4ea" line="#293d87" /><path d="m9 1 6 5m0-5L9 6" stroke="#d82438" strokeWidth="2" /></Ic>],
  ],
  [
    ['Show part', true, <Ic className={R}><BlockShape /><Dot /></Ic>],
    ['Show curves', false, <Ic className={R}><path d="M2 3v11h12" stroke="#6e8292" strokeWidth="2" /><path d="m5 8 6-2v5H5Z" fill="#3795db" /><path d="m9 3 4-1m-3 3 4-1" stroke="#666" /><Dot /></Ic>],
    ['Show stock', false, <Ic className={R}><BlockShape /><path d="m3 8 5 3M6 5l5 3M9 3l5 3" stroke="#4581d1" strokeWidth="1.600" /><Corner /></Ic>],
  ],
  [
    ['Machine', false, <Ic className={R}><path d="M7 1h6v11H7Z" fill="#8d8d8d" stroke="#555" /><path d="M1 9h8v4l-5 1-3-2Z" fill="#aaa" stroke="#666" /><Dot /></Ic>],
    ['Machine table', false, <Ic className={R}><path d="M1 11h13V9h-1l-1-2-1 2H6L5 7 4 9H1Z" fill="#777" /><path d="M1 12h13" stroke="#555" /><Dot /></Ic>],
    ['Holder', true, <Ic className={R}><path d="M2 2h11v4H2Z" fill="#a6aaae" stroke="#5c6166" strokeWidth=".8" /><path d="M4 6h7L9 13H6Z" fill="#7fa9c4" stroke="#4b6c82" strokeWidth=".7" /><Dot /></Ic>],
    ['Tool', true, <Ic className={R}><path d="M5 2h6v12H5Z" fill="#edc018" stroke="#333" strokeWidth=".7" /><path d="m5 7 6-4v3L5 10Zm0 6 6-4v3l-4 2H5Z" fill="#222" /><Dot /></Ic>],
    ['Tool axis', false, <Ic className={R}><path d="M3 1h5v9H3Z" fill="#e5b919" stroke="#333" strokeWidth=".7" /><path d="m3 6 5-4v2L3 8Z" fill="#222" /><path d="m7 10 6-3" stroke="#cd2732" strokeWidth="2.200" /><path d="m7 11 7 3" stroke="#23a83b" strokeWidth="2.800" /></Ic>],
  ],
  [
    ['Rapid moves', true, <Ic className={R}><Zig c="#e8ea25" line="#929d1c" /><path d="M2 2v10M14 1v8" stroke="#ce5040" strokeWidth="1.200" /></Ic>],
    ['Start points', true, <Ic className={R}><Zig c="#e8ea25" line="#929d1c" /><path d="M1 2h3v3H1ZM12 1h2.500v2.500H12Z" fill="#d8234a" /></Ic>],
    ['Approaches', true, <Ic className={R}><path d="M2 2v10M14 1v8" stroke="#ce5040" strokeWidth="1.500" /><path d="M3 12q5 4 10-4" stroke="#a9bb95" strokeDasharray="2 1.500" /></Ic>],
    ['Hatching', false, <Ic className={R}><path d="m2 9 8-6M2 12l11-8M5 13l9-6" stroke="#a2a2a2" strokeWidth="1.500" /></Ic>],
    ['Toolpath', true, <Ic className={R}><path d="m2 8 7-6 5 5-6 8Z" fill="#e3ee4b" stroke="#28b444" strokeWidth="1.700" /><path d="m5 8 3 3 2-1-2-4 2-1 1 2" stroke="#7c8e1a" strokeWidth="1.300" /></Ic>],
    ['Window', false, <Ic className={R}><path d="M2 2h12v12H2Z" stroke="#8e8e8e" strokeDasharray="1.500 1" /><path d="m4 5 4 6 5-8" stroke="#aaa" strokeWidth="1.500" /></Ic>],
    ['Planes', false, <Ic className={R}><path d="m2 9 5-5 6 4-5 6ZM7 4l4-2 3 5" fill="#ddd" stroke="#999" strokeWidth="1.300" /><Dot /></Ic>],
    ['Edit path', false, <Ic className={R}><Zig c="#e8ea25" line="#5aa133" /><Dot /></Ic>],
    ['Trim path', false, <Ic className={R}><Zig {...gray} /><Dot /></Ic>],
    ['Link path', false, <Ic className={R}><path d="m3 7 5 5q4 1 5-6" stroke="#8d8d8d" strokeWidth="2.500" /><Dot /></Ic>],
    ['Reorder', false, <Ic className={R}><Zig {...gray} /><circle cx="4" cy="5" r="3" fill="#eee" stroke="#999" /><Dot /></Ic>],
    ['Layers', false, <Ic className={R}><path d="m1 7 7-5 6 4-5 9Z" fill="#b8b8b8" stroke="#7a7a7a" /><path d="m4 8 3 3 1-6 3 5" stroke="#666" strokeWidth="1.300" /></Ic>],
    ['Direction', false, <Ic className={R}><path d="M3 1v8" stroke="#2dba47" strokeWidth="2" /><path d="m0 7 3 5 3-5Z" fill="#2dba47" /><path d="M3 12q5 5 9-1" stroke="#e5df22" strokeWidth="2" /><path d="M12 13V5" stroke="#c7202e" strokeWidth="2.200" /><path d="m9 6 3-5 3 5Z" fill="#c7202e" /></Ic>],
  ],
]

function RightBar() {
  return (
    <nav aria-label="Display tools" className="w-6 shrink-0 overflow-hidden border-l border-[#b4b4b4] bg-[#f0f0f0]">
      {rightGroups.map((g, i) => (
        <div key={i} className="flex flex-col items-center">
          <DotsRow first={i === 0} className={i === 0 ? 'h-1.5 w-full' : 'h-2 w-full'} />
          {g.map(([name, on, icon]) => (
            <button key={name} type="button" aria-label={name} aria-pressed={on} className={`flex h-5 w-[21px] items-center justify-center ${on ? 'bg-[#c9e2f5]' : ''}`}>{icon}</button>
          ))}
        </div>
      ))}
    </nav>
  )
}

/* ---------- status bar ---------- */

const Coord = ({ axis, value }: { axis: string; value: string }) => (
  <label className="flex items-center gap-1 text-sm">
    <span className="w-[9px]">{axis}</span>
    <input defaultValue={value} className="h-[17px] w-[79px] border border-[#8a8a8a] bg-white pl-0.5 text-[8px]" />
  </label>
)

const Q = ({ x = 12, y = 8 }) => <g transform={`translate(${x} ${y})`}><circle r="3.800" fill="#cfe3f6" stroke="#7e9cbd" strokeWidth=".8" /><path d="M-1.300-1q0-1.500 1.300-1.500T1.300-1Q1.300 0 0 .6M0 1.500v1" stroke="#222f6c" /></g>
const helpIcons: [string, ReactNode][] = [
  ['What is this', <Ic className="size-[18px]"><path d="M1 1v12l3-3 2 5 2-1-2-4h4Z" fill="#fff" stroke="#4c607d" strokeWidth=".9" /><Q y={5} /></Ic>],
  ['Point filter', <Ic className="size-[18px]"><path d="M3 3h9L7 14Z" stroke="#3a6fc2" strokeWidth="1.200" /><circle cx="10" cy="7" r="3" fill="#cfe6f8" stroke="#3a6fc2" /><path d="m12 9 3 4" stroke="#3a6fc2" strokeWidth="1.500" /><path d="m1 1 3 3m0-3L1 4m4 8 3 3m0-3-3 3" stroke="#cf2746" strokeWidth="1.300" /></Ic>],
  ['Region info', <Ic className="size-[18px]"><path d="m2 6 4-3 6 1 3 4-3 5-6 1-4-4Z" fill="#f4f6f8" stroke="#98a3ae" strokeWidth=".8" /><path d="m2 6 5 2 5-4M7 8v6" stroke="#a8b2bc" strokeWidth=".8" /><path d="M1 5h3M12 3h2" stroke="#3d4652" strokeWidth="1.600" /></Ic>],
  ['Palette', <Ic className="size-[18px]"><path d="M2 11q1-6 7-6t6 5-6 5q-7 0-7-4Z" fill="#f4d46b" stroke="#a1762a" strokeWidth=".8" /><circle cx="6" cy="12" r="1.500" fill="#d3333c" /><circle cx="11" cy="12" r="1.500" fill="#345fc4" /><circle cx="11" cy="8" r="1.500" fill="#dc7022" /><path d="M1 5V2h5q2 0 2 3" stroke="#2ba63f" strokeWidth="1.600" /></Ic>],
  ['Caliper', <Ic className="size-[18px]"><path d="M5 1 4 15h3L8 1Z" fill="#c98b55" stroke="#7c4a23" strokeWidth=".7" /><path d="M2 2h12l-2 3H3M3 8h10l-2 3H4" stroke="#5e5348" strokeWidth="1.300" /></Ic>],
  ['Line info', <Ic className="size-[18px]"><path d="M4 1 1 14" stroke="#2864c8" strokeWidth="1.600" /><Q x={11} y={9} /></Ic>],
]
const outIcons: [string, ReactNode][] = [
  ['Information', <Ic className="size-[18px]"><path d="M1 5h8v10H1Z" fill="#f5f8fc" stroke="#607ba6" /><path d="m3 8 4 5m0-5-4 5" stroke="#7462ad" /><circle cx="11" cy="5" r="4.300" fill="#2d6eb8" /><path d="M11 2v1.300M11 4.500V8" stroke="#fff" strokeWidth="1.500" /></Ic>],
  ['Machine setup', <Ic className="size-[18px]"><path d="M2 1h6v3H7v4H3V4H2Z" fill="#7a7a76" stroke="#444" strokeWidth=".5" /><path d="m2 9 13-1v6H2Z" fill="#333" /><path d="M8 9.500 14 9v4H8Z" fill="#cc2b37" /></Ic>],
  ['Section', <Ic className="size-[18px]"><path d="M1 1h14v14H1Z" fill="#fff" /><path d="M1 7h14v8H1Z" fill="#2f67b4" /><path d="M5 7h6v8H5Z" fill="#c7d7e8" /><path d="M7 4h2v11H7Z" fill="#d2352b" /><path d="M6 1h4v3H6Z" fill="#d5a32e" /></Ic>],
  ['Report', <Ic className="size-[18px]"><path d="M2.500 14V2M1 2.500h12M2 6h3M2 9h3" stroke="#444" strokeWidth="1.400" /><path d="M6 5.500h8v9H6Z" fill="#f6cbd0" stroke="#b5223a" strokeWidth="1.100" /><path d="m8 8 4 4m0-4-4 4" stroke="#b5223a" /></Ic>],
]
const Divider = () => <span className="flex h-full w-2 shrink-0 border-l border-[#c4c4c4] py-1 pl-[3px]"><span className="h-full border-l border-dotted border-[#999]" /></span>

function StatusBar() {
  return (
    <footer className="flex h-7 shrink-0 items-center border-t border-[#c4c4c4] bg-[#f0f0f0]">
      <Sep />
      <label htmlFor="pick" className="w-20 shrink-0 text-[8px] whitespace-nowrap">Select Surfaces to hide</label>
      <Ic className="size-3.5"><CubeShape l="#df27b8" r="#2678d2" t="#48a1ee" line="#274e87" /><path d="m0 9 6 6m0-6-6 6" stroke="#d82438" strokeWidth="2" /></Ic>
      <div className="relative flex">
        <select id="pick" className="h-[17px] w-[176px] appearance-none border border-[#8a8a8a] bg-white text-[8px]"><option></option></select>
        <Ic className="pointer-events-none absolute top-[5px] right-0.5 size-2"><path d="m2 5 6 6 6-6" stroke="#444" strokeWidth="1.500" /></Ic>
      </div>
      <span className="w-0.5" />
      <Divider />
      <div className="flex gap-0.5">
        <Coord axis="X" value="-40.8289mm" />
        <Coord axis="Y" value="-20.5348mm" />
        <Coord axis="Z" value="-10.0000mm" />
      </div>
      <Divider />
      <Tools items={helpIcons} cell="h-6 w-[26px]" />
      <Divider />
      <Tools items={outIcons} cell="h-6 w-[26px]" />
      <Divider />
      <button type="button" aria-label="Computation" aria-pressed="true" className="flex h-6 w-6 shrink-0 items-center justify-center bg-[#c9e2f5]">
        <Ic className="size-5"><path d="M2 1h7v7H2Z" fill="#d9e6f2" stroke="#5e80a2" strokeWidth=".8" /><PathShape /><path d="m12 7-3 4h2l-1 4 5-5h-2l2-3Z" fill="#f69a1d" stroke="#c8431b" strokeWidth=".6" /></Ic>
      </button>
      <div role="progressbar" aria-label="Computation progress" aria-valuenow={33} aria-valuemin={0} aria-valuemax={100} className="relative mr-1 ml-[3px] flex h-[15px] flex-1 items-center justify-center border border-[#bcbcbc] bg-[#e6e6e6]">
        <div className="absolute inset-y-0 left-0 bg-linear-to-r from-[#0aa82a] via-[#3dcb57] to-[#0bb02c]" style={{ width: '33%' }} />
        <span className="relative text-[8px]">33%</span>
      </div>
    </footer>
  )
}

export default function App() {
  return (
    <div className="flex h-screen flex-col overflow-hidden bg-[#f0f0f0] font-['Lato','Open_Sans',sans-serif] text-[#111]">
      <TopBar />
      <div className="flex min-h-0 flex-1">
        <LeftBar />
        <TreePanel />
        <div className="w-1.5 shrink-0 border-x border-[#c8c8c8] bg-[#f0f0f0]" />
        <Viewport />
        <RightBar />
      </div>
      <StatusBar />
    </div>
  )
}
